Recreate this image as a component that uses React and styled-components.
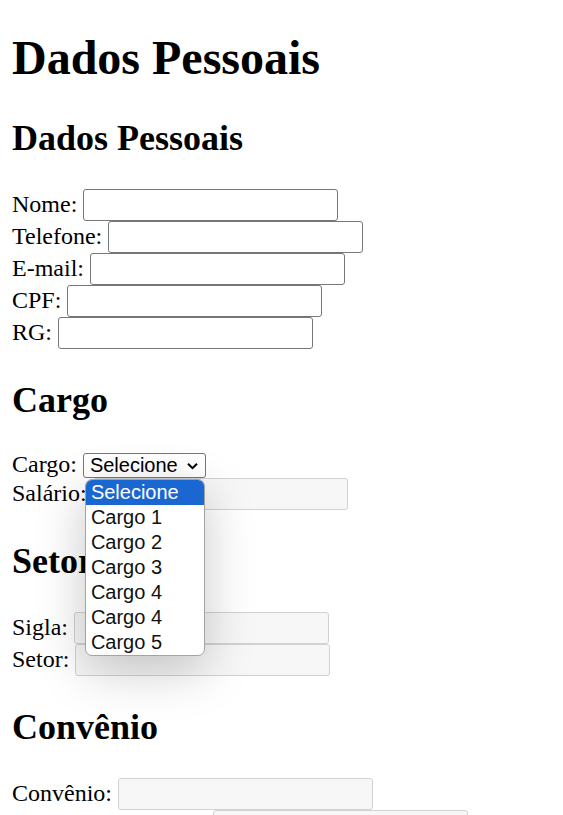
import styled, { createGlobalStyle } from 'styled-components';

const GlobalStyle = createGlobalStyle`
  body {
    margin: 12px;
    font-family: "Liberation Serif", "Times New Roman", serif;
    font-size: 24px;
    color: #000;
    background: #fff;
  }
`;

const PageTitle = styled.h1`
  font-size: 48px;
  font-weight: bold;
  margin: 18px 0 32px;
`;

const SectionTitle = styled.h2`
  font-size: 36px;
  font-weight: bold;
  margin: 30px 0;
`;

const Row = styled.div`
  display: flex;
  align-items: baseline;
  gap: 6px;
`;

const Label = styled.label`
  white-space: nowrap;
`;

const TextInput = styled.input`
  box-sizing: border-box;
  width: 255px;
  height: 32px;
  padding: 0 3px;
  font: 20px "Liberation Sans", Arial, sans-serif;
  border: 1px solid ${({ disabled }) => (disabled ? '#d2d2d2' : '#767676')};
  border-radius: 3px;
  background: ${({ disabled }) => (disabled ? '#f7f7f7' : '#fff')};
  outline: none;
`;

const SelectWrap = styled.div`
  position: relative;
`;

const SelectBox = styled.div`
  box-sizing: border-box;
  display: flex;
  align-items: center;
  justify-content: space-between;
  width: 123px;
  height: 25px;
  padding: 0 7px 0 6px;
  border: 1px solid #767676;
  border-radius: 3px;
  font: 20px "Liberation Sans", Arial, sans-serif;
  background: #fff;
`;

const Popup = styled.ul`
  position: absolute;
  top: calc(100% + 1px);
  left: 2px;
  z-index: 10;
  box-sizing: border-box;
  width: 120px;
  margin: 0;
  padding: 0;
  list-style: none;
  background: #fff;
  border: 1px solid #a3a3a3;
  border-radius: 7px;
  overflow: hidden;
  box-shadow: 0 14px 50px rgba(0, 0, 0, 0.22);
`;

const Option = styled.li`
  height: 25px;
  padding: 0 5px;
  font: 20px/25px "Liberation Sans", Arial, sans-serif;
  color: ${({ selected }) => (selected ? '#fff' : '#111')};
  background: ${({ selected }) => (selected ? '#1a67d2' : 'transparent')};
`;

const pessoais = ['Nome:', 'Telefone:', 'E-mail:', 'CPF:', 'RG:'];
const cargos = ['Selecione', 'Cargo 1', 'Cargo 2', 'Cargo 3', 'Cargo 4', 'Cargo 4', 'Cargo 5'];

function Field({ label, disabled }) {
  return (
    <Row>
      <Label>{label}</Label>
      <TextInput type="text" disabled={disabled} />
    </Row>
  );
}

export default function App() {
  return (
    <>
      <GlobalStyle />
      <PageTitle>Dados Pessoais</PageTitle>

      <SectionTitle>Dados Pessoais</SectionTitle>
      {pessoais.map((l) => (
        <Field key={l} label={l} />
      ))}

      <SectionTitle>Cargo</SectionTitle>
      <Row>
        <Label>Cargo:</Label>
        <SelectWrap>
          <SelectBox>
            <span>Selecione</span>
            <svg width="11" height="8" viewBox="0 0 11 8">
              <polyline points="1,1.8 5.5,6.2 10,1.8" fill="none" stroke="#000" strokeWidth="2" />
            </svg>
          </SelectBox>
          <Popup>
            {cargos.map((c, i) => (
              <Option key={i} selected={i === 0}>{c}</Option>
            ))}
          </Popup>
        </SelectWrap>
      </Row>
      <Field label="Salário:" disabled />

      <SectionTitle>Setor</SectionTitle>
      <Field label="Sigla:" disabled />
      <Field label="Setor:" disabled />

      <SectionTitle>Convênio</SectionTitle>
      <Field label="Convênio:" disabled />
      <Field label="Número da Apólice:" disabled />
    </>
  );
}
